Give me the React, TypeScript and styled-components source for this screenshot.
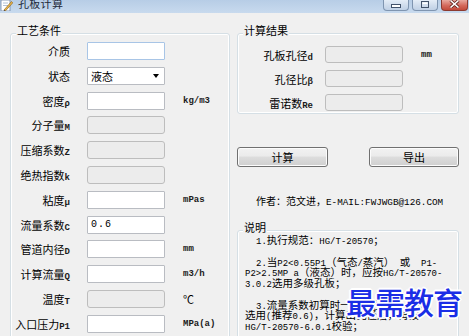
import React from 'react';
import styled, { createGlobalStyle } from 'styled-components';

const Global = createGlobalStyle`
  html, body { margin: 0; padding: 0; }
  body {
    background: #f0f0f0;
    font-family: "Noto Sans CJK SC", "Noto Sans", sans-serif;
    font-size: 11px;
    color: #000;
    overflow: hidden;
  }
`;

const Window = styled.div`
  position: relative;
  width: 469px;
  height: 336px;
  overflow: hidden;
  display: flex;
  flex-direction: column;
  background: #f0f0f0;
`;

const TitleBar = styled.div`
  flex: none;
  height: 13px;
  display: flex;
  align-items: flex-start;
  background: linear-gradient(#b7cde6, #c8daee);
  overflow: hidden;
`;

const TitleIcon = styled.svg`
  flex: none;
  width: 13px;
  height: 11px;
  margin: 0 5px 0 0;
`;

const TitleText = styled.span`
  font-size: 11px;
  line-height: 11px;
  margin-top: -2px;
  color: #1e2a3a;
  letter-spacing: 0.3px;
`;

const WinButtons = styled.div`
  margin-left: auto;
  display: flex;
  gap: 3px;
  padding-right: 1px;
`;

const WinButton = styled.div<{ $close?: boolean }>`
  width: ${p => (p.$close ? 27 : 26)}px;
  height: 11px;
  box-sizing: border-box;
  border: 1px solid ${p => (p.$close ? '#8c3a30' : '#7f95b0')};
  border-top: none;
  border-radius: 0 0 4px 4px;
  background: ${p =>
    p.$close
      ? 'linear-gradient(#e8a99f, #d4695c 55%, #c24a3b)'
      : 'linear-gradient(#e4edf7, #cfdcec 55%, #c0d1e5)'};
  display: flex;
  align-items: flex-end;
  justify-content: center;
  padding-bottom: 2px;
`;

const Content = styled.div`
  display: flex;
  gap: 7px;
  padding: 20px 10px 0 10px;
  align-items: flex-start;
`;

const LeftCol = styled.div`
  width: 220px;
  flex: none;
`;

const RightCol = styled.div`
  width: 222px;
  flex: none;
  display: flex;
  flex-direction: column;
`;

const Group = styled.div<{ $h: number }>`
  position: relative;
  box-sizing: border-box;
  height: ${p => p.$h}px;
  border: 1px solid #d5dfe5;
  border-radius: 3px;
  box-shadow: inset 0 0 0 1px #ffffff;
`;

const GroupTitle = styled.span`
  position: absolute;
  top: -11px;
  left: 5px;
  padding: 0 1px;
  background: #f0f0f0;
  font-size: 11px;
  line-height: 14px;
  height: 14px;
`;

const Form = styled.div<{ $label: number; $gap: number; $row: number; $rowGap: number; $top: number }>`
  display: grid;
  grid-template-columns: ${p => p.$label}px 78px 1fr;
  column-gap: ${p => p.$gap}px;
  grid-auto-rows: ${p => p.$row}px;
  row-gap: ${p => p.$rowGap}px;
  align-items: center;
  padding-top: ${p => p.$top}px;
`;

const Label = styled.div`
  display: flex;
  justify-content: flex-end;
  align-items: baseline;
  white-space: nowrap;
  height: 14px;
  line-height: 14px;
  font-size: 11px;
`;

const Field = styled.div<{ $disabled?: boolean; $hover?: boolean }>`
  box-sizing: border-box;
  height: 100%;
  display: flex;
  align-items: center;
  padding: 0 3px;
  border: 1px solid ${p => (p.$hover ? '#a8c5e6' : p.$disabled ? '#bdbdbd' : '#b9bcc2')};
  border-radius: ${p => (p.$disabled ? 3 : 1)}px;
  background: ${p => (p.$disabled ? '#ececec' : '#ffffff')};
  font-size: 11px;
  line-height: 14px;
`;

const Arrow = styled.span`
  margin-left: auto;
  margin-right: 2px;
  width: 0;
  height: 0;
  border-left: 3.5px solid transparent;
  border-right: 3.5px solid transparent;
  border-top: 4px solid #000;
`;

const Unit = styled.div<{ $offset: number }>`
  display: flex;
  align-items: baseline;
  margin-left: ${p => p.$offset}px;
  white-space: nowrap;
  height: 14px;
  line-height: 14px;
  font-size: 11px;
`;

const Lat = styled.span<{ $bold?: boolean; $size?: number }>`
  font-family: "Liberation Mono", "DejaVu Sans Mono", monospace;
  font-size: ${p => p.$size ?? 9}px;
  font-weight: ${p => (p.$bold ? 700 : 400)};
  color: ${p => (p.$bold ? '#1a1a1a' : 'inherit')};
  white-space: pre;
`;

const ValueText = styled.span`
  font-family: "Liberation Mono", monospace;
  font-size: 10px;
  letter-spacing: 1px;
`;

const ButtonRow = styled.div`
  display: flex;
  justify-content: space-between;
  margin-top: 33px;
`;

const Button = styled.div<{ $w: number }>`
  box-sizing: border-box;
  width: ${p => p.$w}px;
  height: 20px;
  border: 1px solid #707070;
  border-radius: 3px;
  background: linear-gradient(#f2f2f2 0%, #ebebeb 45%, #dddddd 50%, #cfcfcf 100%);
  box-shadow: inset 0 0 0 1px #fcfcfc;
  display: flex;
  align-items: center;
  justify-content: center;
  font-size: 11px;
  line-height: 14px;
`;

const Author = styled.div`
  margin-top: 27px;
  padding-left: 19px;
  height: 14px;
  display: flex;
  justify-content: flex-start;
  align-items: baseline;
  white-space: nowrap;
  font-size: 10px;
  line-height: 14px;
`;

const NoteGroup = styled(Group)`
  margin-top: 22px;
`;

const Notes = styled.div`
  padding: 4px 0 0 7px;
  font-size: 10.5px;
`;

const Line = styled.div<{ $indent?: boolean }>`
  display: flex;
  align-items: baseline;
  height: 10.75px;
  line-height: 10.75px;
  white-space: nowrap;
  padding-left: ${p => (p.$indent ? 11 : 0)}px;
`;

const Watermark = styled.div`
  position: absolute;
  left: 346px;
  top: 284px;
  font-size: 30px;
  line-height: 34px;
  letter-spacing: -1px;
  font-weight: 500;
  color: #1b2ee6;
  text-shadow: 1px 0 #fff, -1px 0 #fff, 0 1px #fff, 0 -1px #fff, 1px 1px #fff, -1px -1px #fff,
    1px -1px #fff, -1px 1px #fff, 2px 0 #fff, -2px 0 #fff, 0 2px #fff, 0 -2px #fff;
  pointer-events: none;
`;

const CJK_SPLIT = /([\u2100-\u214f\u3000-\u9fff\uff00-\uffef]+)/;
const CJK_TEST = /[\u2100-\u214f\u3000-\u9fff\uff00-\uffef]/;

function Mix({ t, bold, size }: { t: string; bold?: boolean; size?: number }) {
  const parts = t.split(CJK_SPLIT).filter(Boolean);
  return (
    <>
      {parts.map((p, i) =>
        CJK_TEST.test(p) ? (
          <span key={i}>{p}</span>
        ) : (
          <Lat key={i} $bold={bold} $size={size}>
            {p}
          </Lat>
        )
      )}
    </>
  );
}

type Row = { label: string; value?: string; unit?: string; disabled?: boolean; hover?: boolean; select?: boolean };

const leftRows: Row[] = [
  { label: '介质', hover: true },
  { label: '状态', value: '液态', select: true },
  { label: '密度ρ', unit: 'kg/m3' },
  { label: '分子量M', disabled: true },
  { label: '压缩系数Z', disabled: true },
  { label: '绝热指数k', disabled: true },
  { label: '粘度μ', unit: 'mPas' },
  { label: '流量系数C', value: '0.6' },
  { label: '管道内径D', unit: 'mm' },
  { label: '计算流量Q', unit: 'm3/h' },
  { label: '温度T', disabled: true, unit: '℃' },
  { label: '入口压力P1', unit: 'MPa(a)' },
];

const resultRows: Row[] = [
  { label: '孔板孔径d', disabled: true, unit: 'mm' },
  { label: '孔径比β', disabled: true },
  { label: '雷诺数Re', disabled: true },
];

const notes: { t: string; indent?: boolean }[] = [
  { t: '1.执行规范：HG/T-20570；', indent: true },
  { t: '' },
  { t: '2.当P2<0.55P1（气态/蒸汽） 或  P1-', indent: true },
  { t: 'P2>2.5MP a（液态）时，应按HG/T-20570-' },
  { t: '3.0.2选用多级孔板；' },
  { t: '' },
  { t: '3.流量系数初算时一般可在0.6~0.7间', indent: true },
  { t: '选用(推荐0.6)，计算出孔径后，再按' },
  { t: 'HG/T-20570-6.0.1校验；' },
];

function FormRows({ rows, unitOffset }: { rows: Row[]; unitOffset: number }) {
  return (
    <>
      {rows.map(r => (
        <React.Fragment key={r.label}>
          <Label>
            <Mix t={r.label} bold />
          </Label>
          <Field $disabled={r.disabled} $hover={r.hover}>
            {r.value ? (CJK_TEST.test(r.value) ? <span>{r.value}</span> : <ValueText>{r.value}</ValueText>) : null}
            {r.select ? <Arrow /> : null}
          </Field>
          <Unit $offset={unitOffset}>{r.unit ? <Mix t={r.unit} bold /> : null}</Unit>
        </React.Fragment>
      ))}
    </>
  );
}

export default function App() {
  return (
    <>
      <Global />
      <Window>
        <TitleBar>
          <TitleIcon viewBox="0 0 13 11">
            <rect x="1" y="0" width="9" height="11" fill="#ffffff" stroke="#6f86a6" strokeWidth="0.8" />
            <line x1="3" y1="3" x2="8" y2="3" stroke="#9fb2cc" strokeWidth="0.8" />
            <line x1="3" y1="5.5" x2="8" y2="5.5" stroke="#9fb2cc" strokeWidth="0.8" />
            <path d="M4 10 L11.5 1.5 L12.8 2.8 L5.3 11 Z" fill="#e8b64a" stroke="#8a5a10" strokeWidth="0.6" />
            <path d="M4 10 L5.3 11 L3.6 11.2 Z" fill="#333" />
          </TitleIcon>
          <TitleText>孔板计算</TitleText>
          <WinButtons>
            <WinButton>
              <svg width="10" height="4" viewBox="0 0 10 4">
                <rect x="0.5" y="0.5" width="9" height="3" fill="#fff" stroke="#42536b" strokeWidth="1" />
              </svg>
            </WinButton>
            <WinButton>
              <svg width="8" height="7" viewBox="0 0 8 7">
                <rect x="0.5" y="0.5" width="7" height="6" fill="none" stroke="#42536b" strokeWidth="1" />
                <rect x="1.5" y="1.5" width="5" height="1.5" fill="#fff" />
              </svg>
            </WinButton>
            <WinButton $close>
              <svg width="11" height="8" viewBox="0 0 11 8">
                <path d="M1.5 0.5 L9.5 7.5 M9.5 0.5 L1.5 7.5" stroke="#5a1e16" strokeWidth="3" />
                <path d="M1.5 0.5 L9.5 7.5 M9.5 0.5 L1.5 7.5" stroke="#ffffff" strokeWidth="1.6" />
              </svg>
            </WinButton>
          </WinButtons>
        </TitleBar>
        <Content>
          <LeftCol>
            <Group $h={330}>
              <GroupTitle>工艺条件</GroupTitle>
              <Form $label={59} $gap={17} $row={18} $rowGap={6.8} $top={8}>
                <FormRows rows={leftRows} unitOffset={1} />
              </Form>
            </Group>
          </LeftCol>
          <RightCol>
            <Group $h={81}>
              <GroupTitle>计算结果</GroupTitle>
              <Form $label={75} $gap={12} $row={17} $rowGap={7} $top={12}>
                <FormRows rows={resultRows} unitOffset={6} />
              </Form>
            </Group>
            <ButtonRow>
              <Button $w={91}>计算</Button>
              <Button $w={90}>导出</Button>
            </ButtonRow>
            <Author>
              <Mix t="作者：范文进，E-MAIL:FWJWGB@126.COM" size={9.3} />
            </Author>
            <NoteGroup $h={130}>
              <GroupTitle>说明</GroupTitle>
              <Notes>
                {notes.map((n, i) => (
                  <Line key={i} $indent={n.indent}>
                    <Mix t={n.t} size={9} />
                  </Line>
                ))}
              </Notes>
            </NoteGroup>
          </RightCol>
        </Content>
        <Watermark>最需教育</Watermark>
      </Window>
    </>
  );
}
